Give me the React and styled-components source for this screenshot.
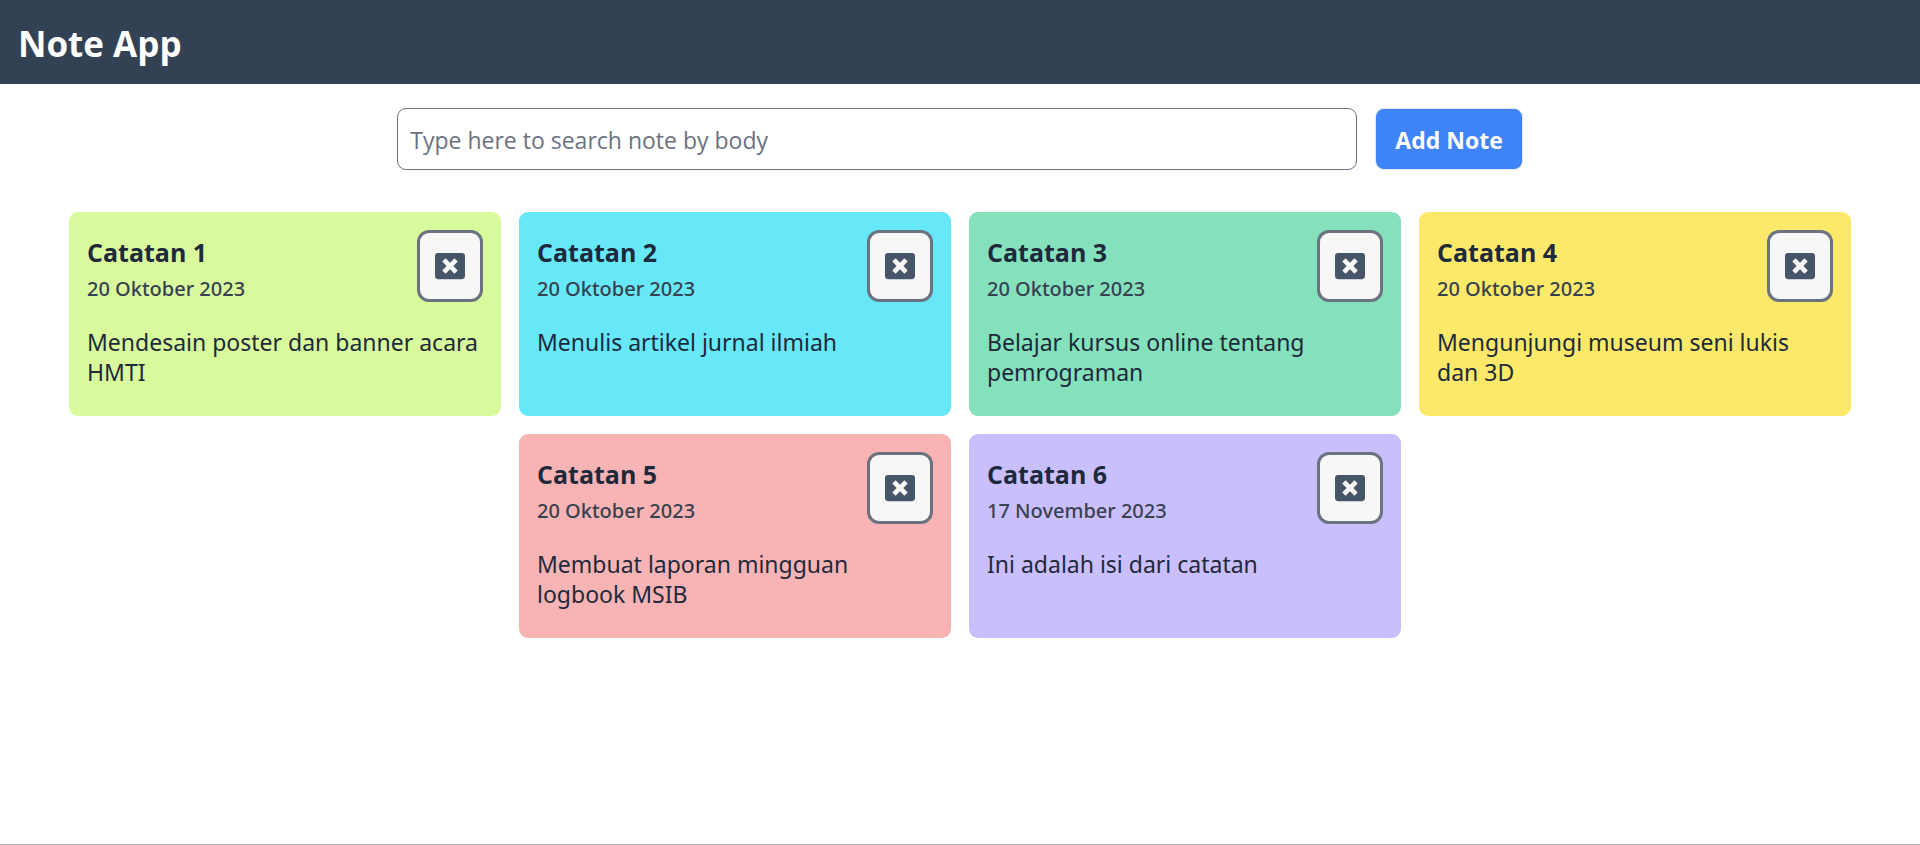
import React, { useState } from "react";
import styled, { createGlobalStyle } from "styled-components";
import { FaWindowClose } from "react-icons/fa";

const GlobalStyle = createGlobalStyle`
  *, *::before, *::after {
    box-sizing: border-box;
  }
  body {
    margin: 0;
    background: #fff;
    color: #1e293b;
    font-family: "Open Sans", "Noto Sans", sans-serif;
  }
  h1, h2, p {
    margin: 0;
  }
`;

const Page = styled.div`
  display: flex;
  flex-direction: column;
  min-height: 100vh;
  border-bottom: 1px solid #b4b4b4;
`;

const Header = styled.header`
  padding: 20px 18px 16px;
  background: #334155;
`;

const AppTitle = styled.h1`
  font-size: 35px;
  font-weight: 700;
  line-height: 48px;
  color: #fff;
`;

const Toolbar = styled.form`
  display: flex;
  justify-content: center;
  gap: 18px;
  margin: 24px 0 42px;
`;

const SearchInput = styled.input`
  width: 50%;
  height: 62px;
  padding: 2px 12px 0;
  border: 1px solid #6b7280;
  border-radius: 9px;
  background: #fff;
  color: #1e293b;
  font-family: inherit;
  font-size: 23px;

  &::placeholder {
    color: #6b7280;
    opacity: 1;
  }
`;

const AddButton = styled.button`
  padding: 2px 19px 0;
  border: 1px solid #e5e7eb;
  border-radius: 9px;
  background: #3f83f8;
  color: #fff;
  font-family: inherit;
  font-size: 23px;
  font-weight: 700;
  white-space: nowrap;
  cursor: pointer;
`;

const NoteList = styled.main`
  display: flex;
  flex-wrap: wrap;
  justify-content: center;
  gap: 18px;
  padding: 0 18px 18px;
`;

const Card = styled.article`
  width: 432px;
  max-width: 100%;
  padding: 18px;
  border-radius: 9px;
  background: ${(p) => p.$color};
`;

const CardTop = styled.div`
  display: flex;
  justify-content: space-between;
  align-items: flex-start;
`;

const CardHeading = styled.div`
  padding-top: 4px;
`;

const NoteTitle = styled.h2`
  font-size: 25px;
  font-weight: 700;
  line-height: 36px;
`;

const NoteDate = styled.p`
  font-family: "Noto Sans", sans-serif;
  font-size: 20px;
  font-weight: 500;
  line-height: 38px;
  color: #374151;
`;

const NoteBody = styled.p`
  margin-top: 19px;
  padding-bottom: 11px;
  font-family: "Noto Sans", sans-serif;
  font-size: 23px;
  line-height: 30px;
`;

const DeleteButton = styled.button`
  display: flex;
  padding: 18px 15px;
  border: 3px solid #6b7280;
  border-radius: 12px;
  background: #f7f7f7;
  color: #475569;
  font-size: 30px;
  cursor: pointer;
`;

const initialNotes = [
  { id: 1, title: "Catatan 1", date: "20 Oktober 2023", body: "Mendesain poster dan banner acara HMTI", color: "#d9f99d" },
  { id: 2, title: "Catatan 2", date: "20 Oktober 2023", body: "Menulis artikel jurnal ilmiah", color: "#67e8f9" },
  { id: 3, title: "Catatan 3", date: "20 Oktober 2023", body: "Belajar kursus online tentang pemrograman", color: "#84e1bc" },
  { id: 4, title: "Catatan 4", date: "20 Oktober 2023", body: "Mengunjungi museum seni lukis dan 3D", color: "#fce96a" },
  { id: 5, title: "Catatan 5", date: "20 Oktober 2023", body: "Membuat laporan mingguan logbook MSIB", color: "#f8b4b4" },
  { id: 6, title: "Catatan 6", date: "17 November 2023", body: "Ini adalah isi dari catatan", color: "#cabffd" },
];

function Note({ note, onDelete }) {
  return (
    <Card $color={note.color}>
      <CardTop>
        <CardHeading>
          <NoteTitle>{note.title}</NoteTitle>
          <NoteDate>{note.date}</NoteDate>
        </CardHeading>
        <DeleteButton type="button" aria-label={`Delete ${note.title}`} onClick={() => onDelete(note.id)}>
          <FaWindowClose aria-hidden="true" />
        </DeleteButton>
      </CardTop>
      <NoteBody>{note.body}</NoteBody>
    </Card>
  );
}

export default function App() {
  const [notes, setNotes] = useState(initialNotes);
  const [query, setQuery] = useState("");
  const visible = notes.filter((n) => n.body.toLowerCase().includes(query.toLowerCase()));

  return (
    <Page>
      <GlobalStyle />
      <Header>
        <AppTitle>Note App</AppTitle>
      </Header>
      <Toolbar role="search" onSubmit={(e) => e.preventDefault()}>
        <SearchInput
          type="text"
          aria-label="Search note by body"
          placeholder="Type here to search note by body"
          value={query}
          onChange={(e) => setQuery(e.target.value)}
        />
        <AddButton type="button">Add Note</AddButton>
      </Toolbar>
      <NoteList>
        {visible.map((note) => (
          <Note key={note.id} note={note} onDelete={(id) => setNotes(notes.filter((n) => n.id !== id))} />
        ))}
      </NoteList>
    </Page>
  );
}
